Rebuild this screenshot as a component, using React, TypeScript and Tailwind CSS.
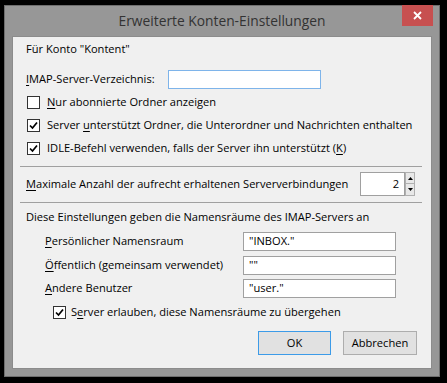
import React from "react";

const font = { fontFamily: '"Open Sans", "Noto Sans", sans-serif' };

function Check({ checked }: { checked: boolean }) {
  return (
    <div className="w-[13px] h-[13px] shrink-0 bg-white border border-[#333333] flex items-center justify-center">
      {checked && (
        <svg width="9" height="9" viewBox="0 0 9 9">
          <path d="M1 4.5 L3.5 7 L8 1.5" fill="none" stroke="#000" strokeWidth="1.7" />
        </svg>
      )}
    </div>
  );
}

function U({ children }: { children: React.ReactNode }) {
  return <span className="underline underline-offset-2 decoration-1">{children}</span>;
}

export default function App() {
  return (
    <div className="w-[447px] h-[383px] bg-black pt-[5px] pl-[4px] whitespace-nowrap" style={font}>
      <div className="w-[436px] h-[372px] bg-[#979797] border border-[#6e6e6e] flex flex-col">
        <div className="relative h-[30px] shrink-0 flex items-center justify-center">
          <span className="text-[13.8px] text-[#333333] leading-none">Erweiterte Konten-Einstellungen</span>
          <div className="absolute right-[6px] top-[-1px] w-[31px] h-[21px] bg-[#c75050] flex items-center justify-center">
            <svg width="9" height="9" viewBox="0 0 9 9">
              <path d="M1 1 L8 8 M8 1 L1 8" stroke="#fff" strokeWidth="1.8" />
            </svg>
          </div>
        </div>
        <div className="ml-[7px] w-[420px] h-[333px] bg-[#f0f0f0] border border-[#8c8c8c] flex flex-col text-[11.1px] text-black pl-[13px]">
          <div className="h-[25px] flex items-center">Für Konto "Kontent"</div>
          <div className="mt-[5px] h-[24px] flex items-center">
            <span className="w-[142px]"><U>I</U>MAP-Server-Verzeichnis:</span>
            <div className="w-[153px] h-[19px] bg-white border border-[#7eb4ea]" />
          </div>
          <div className="h-[23px] flex items-center gap-[7px] pl-[1px]">
            <Check checked={false} />
            <span><U>N</U>ur abonnierte Ordner anzeigen</span>
          </div>
          <div className="h-[23px] flex items-center gap-[7px] pl-[1px]">
            <Check checked={true} />
            <span>Server <U>u</U>nterstützt Ordner, die Unterordner und Nachrichten enthalten</span>
          </div>
          <div className="h-[23px] flex items-center gap-[7px] pl-[1px]">
            <Check checked={true} />
            <span>IDLE-Befehl verwenden, falls der Server ihn unterstützt (<U>K</U>)</span>
          </div>
          <div className="mt-[6px] ml-[-6px] w-[402px] h-px bg-[#a0a0a0]" />
          <div className="mt-[5px] h-[24px] flex items-center">
            <span className="w-[334px]"><U>M</U>aximale Anzahl der aufrecht erhaltenen Serververbindungen</span>
            <div className="flex h-[24px]">
              <div className="w-[45px] h-[24px] bg-white border border-[#a0a0a0] flex items-center justify-end pr-[5px]">2</div>
              <div className="w-[10px] flex flex-col">
                <div className="h-[12px] bg-[#e8e8e8] border border-[#b0b0b0] flex items-center justify-center">
                  <svg width="5" height="3" viewBox="0 0 5 3"><path d="M0 3 L2.5 0 L5 3 Z" fill="#000" /></svg>
                </div>
                <div className="h-[12px] bg-[#e8e8e8] border border-[#b0b0b0] border-t-0 flex items-center justify-center">
                  <svg width="5" height="3" viewBox="0 0 5 3"><path d="M0 0 L2.5 3 L5 0 Z" fill="#000" /></svg>
                </div>
              </div>
            </div>
          </div>
          <div className="mt-[6px] ml-[-6px] w-[402px] h-px bg-[#a0a0a0]" />
          <div className="mt-[2px] h-[24px] flex items-center">Diese Einstellungen geben die Namensräume des IMAP-Servers an</div>
          <div className="mt-[3px] h-[19px] flex items-center pl-[19px]">
            <span className="w-[198px]"><U>P</U>ersönlicher Namensraum</span>
            <div className="w-[153px] h-[19px] bg-white border border-[#a0a0a0] flex items-center pl-[5px]">"INBOX."</div>
          </div>
          <div className="mt-[5px] h-[19px] flex items-center pl-[19px]">
            <span className="w-[198px]"><U>Ö</U>ffentlich (gemeinsam verwendet)</span>
            <div className="w-[153px] h-[19px] bg-white border border-[#a0a0a0] flex items-center pl-[5px]">""</div>
          </div>
          <div className="mt-[4px] h-[19px] flex items-center pl-[19px]">
            <span className="w-[198px]"><U>A</U>ndere Benutzer</span>
            <div className="w-[153px] h-[19px] bg-white border border-[#a0a0a0] flex items-center pl-[5px]">"user."</div>
          </div>
          <div className="mt-[3px] h-[22px] flex items-center gap-[5px] pl-[27px]">
            <Check checked={true} />
            <span>S<U>e</U>rver erlauben, diese Namensräume zu übergehen</span>
          </div>
          <div className="mt-[8px] flex gap-[12px] pl-[232px]">
            <div className="w-[73px] h-[24px] bg-[#e1e1e1] border border-[#3c9be8] flex items-center justify-center">OK</div>
            <div className="w-[74px] h-[24px] bg-[#e1e1e1] border border-[#adadad] flex items-center justify-center">Abbrechen</div>
          </div>
        </div>
      </div>
    </div>
  );
}
